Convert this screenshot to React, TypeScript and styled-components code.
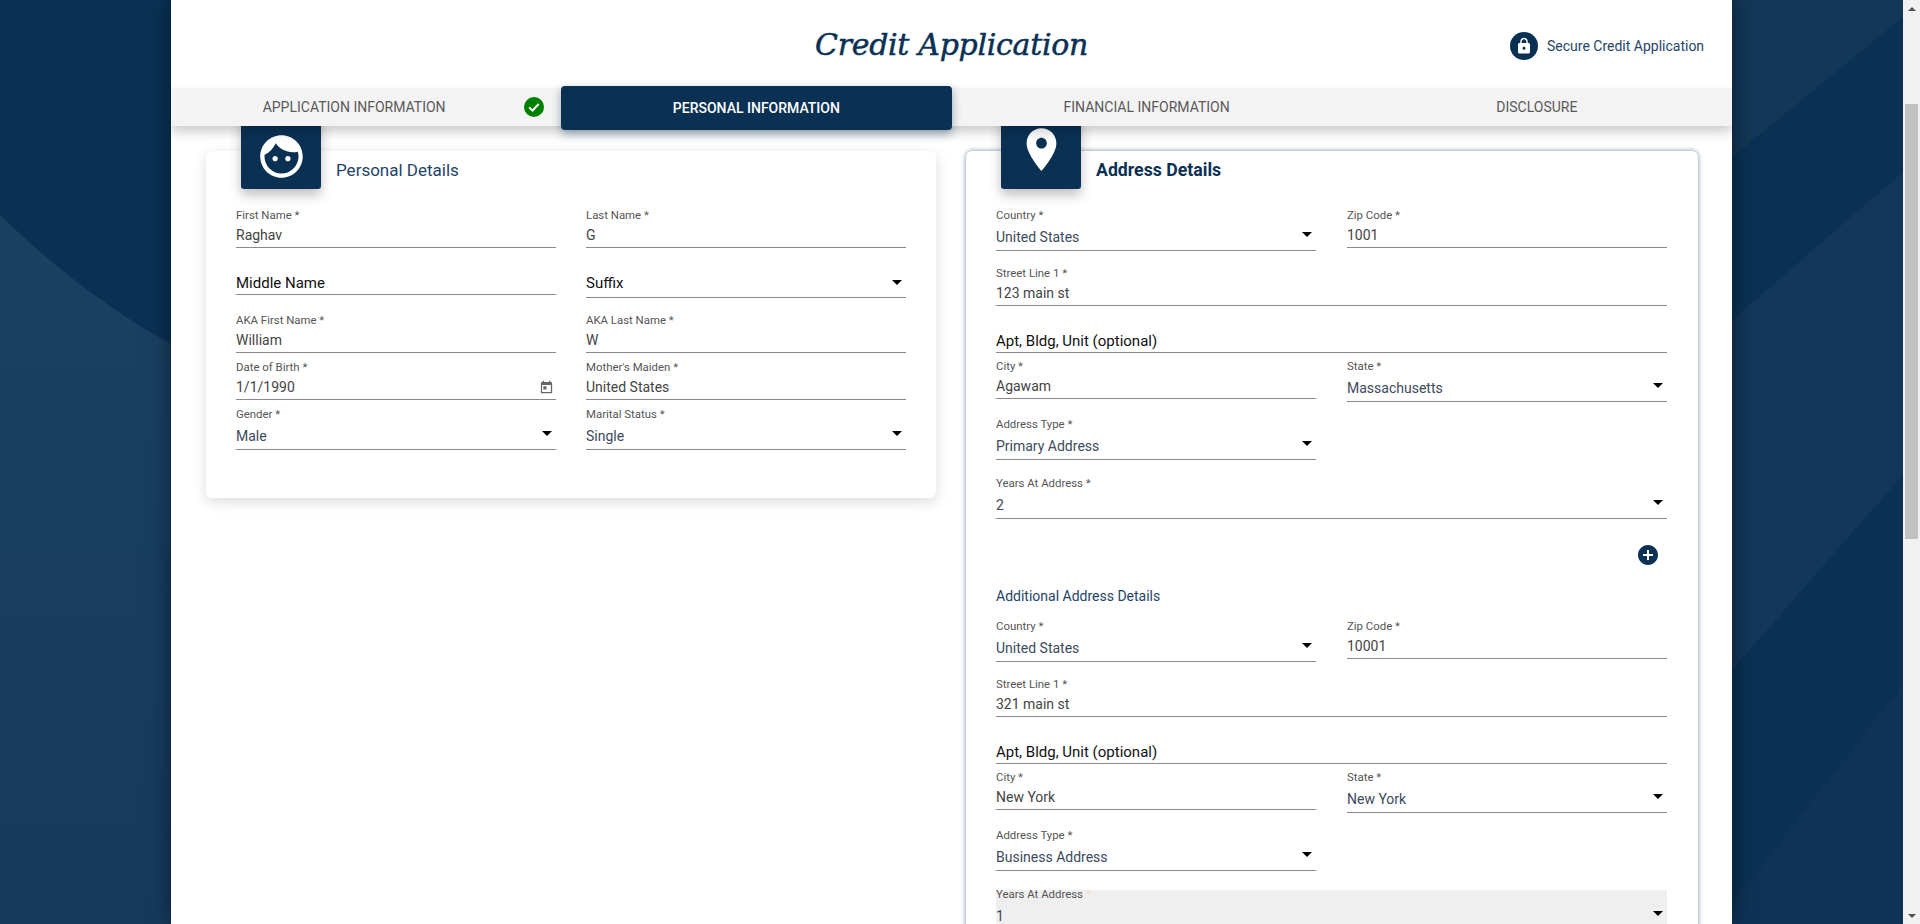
import React from "react";
import styled, { createGlobalStyle } from "styled-components";

const NAVY = "#0a3154";

const Global = createGlobalStyle`
  html, body { margin: 0; padding: 0; height: 924px; overflow: hidden; background: ${NAVY}; }
  #root { height: 924px; }
  * { box-sizing: border-box; }
`;

const Viewport = styled.div`
  display: flex;
  width: 1920px;
  height: 924px;
  font-family: Roboto, "Liberation Sans", sans-serif;
`;

const Stage = styled.div`
  position: relative;
  flex: 1;
  height: 924px;
  overflow: hidden;
  background: ${NAVY};
`;

const Backdrop = styled.svg`
  position: absolute;
  inset: 0;
  width: 1903px;
  height: 924px;
`;

const Scrollbar = styled.div`
  width: 17px;
  height: 924px;
  background: #f1f1f1;
  display: flex;
  flex-direction: column;
  align-items: center;
  justify-content: space-between;
  position: relative;
`;

const ArrowBtn = styled.div<{ $down?: boolean }>`
  height: 17px;
  width: 17px;
  display: flex;
  align-items: center;
  justify-content: center;
  &::before {
    content: "";
    border-left: 4px solid transparent;
    border-right: 4px solid transparent;
    ${(p) => (p.$down ? "border-top: 4px solid #505050;" : "border-bottom: 4px solid #505050;")}
  }
`;

const Thumb = styled.div`
  position: absolute;
  left: 2px;
  width: 13px;
  top: 104px;
  height: 435px;
  background: #c1c1c1;
`;

const Panel = styled.main`
  position: relative;
  width: 1561px;
  height: 924px;
  margin: 0 auto;
  background: #fff;
  box-shadow: 0 0 20px rgba(0, 0, 0, 0.5);
  overflow: hidden;
`;

const Header = styled.header`
  position: relative;
  height: 88px;
  display: flex;
  align-items: center;
  justify-content: center;
`;

const Title = styled.h1`
  margin: 0;
  font-family: "DejaVu Serif", "Liberation Serif", serif;
  font-style: italic;
  font-weight: 400;
  font-size: 30px;
  letter-spacing: -0.3px;
  -webkit-text-stroke: 0.5px ${NAVY};
  color: ${NAVY};
`;

const Secure = styled.div`
  position: absolute;
  left: 1339px;
  top: 32px;
  display: flex;
  align-items: center;
  gap: 9px;
  font-size: 14px;
  color: #1f4467;
`;

const SecureBadge = styled.span`
  width: 28px;
  height: 28px;
  border-radius: 50%;
  background: ${NAVY};
  display: flex;
  align-items: center;
  justify-content: center;
`;

const Tabs = styled.nav`
  position: relative;
  z-index: 3;
  height: 38px;
  display: grid;
  grid-template-columns: repeat(4, 1fr);
  background: #f3f3f3;
  box-shadow: 0 6px 12px rgba(0, 0, 0, 0.2);
`;

const Tab = styled.div<{ $active?: boolean; $done?: boolean }>`
  position: relative;
  display: flex;
  align-items: center;
  justify-content: center;
  font-size: 14px;
  text-transform: uppercase;
  padding-right: ${(p) => (p.$done ? "24px" : "0")};
  padding-bottom: ${(p) => (p.$active ? "1px" : "5px")};
  color: ${(p) => (p.$active ? "#fff" : "#5a5a5a")};
  font-weight: ${(p) => (p.$active ? 500 : 400)};
  ${(p) =>
    p.$active
      ? `background: ${NAVY}; height: 44px; margin-top: -2px; border-radius: 4px; box-shadow: 0 4px 10px rgba(10,49,84,.4);`
      : ""}
`;

const DoneMark = styled.svg`
  position: absolute;
  right: 17px;
  top: 9px;
  width: 20px;
  height: 20px;
`;

const Columns = styled.div`
  display: grid;
  grid-template-columns: 730px 732px;
  column-gap: 30px;
  padding: 25px 0 0 35px;
`;

const Card = styled.section<{ $focused?: boolean }>`
  position: relative;
  border-radius: 6px;
  background: #fff;
  padding: 57px ${(p) => (p.$focused ? "31px" : "30px")} 0 30px;
  box-shadow: ${(p) =>
    p.$focused
      ? "0 0 5px rgba(10,49,84,.55)"
      : "0 4px 14px rgba(0,0,0,.14)"};
  height: ${(p) => (p.$focused ? "1100px" : "347px")};
`;

const IconBox = styled.div<{ $lower?: boolean }>`
  position: absolute;
  left: 35px;
  top: -42px;
  width: 80px;
  height: 80px;
  padding-top: ${(p) => (p.$lower ? "14px" : "0")};
  border-radius: 3px;
  background: ${NAVY};
  display: flex;
  align-items: center;
  justify-content: center;
  box-shadow: 0 6px 12px rgba(0, 0, 0, 0.25);
`;

const CardTitle = styled.h2<{ $strong?: boolean }>`
  position: absolute;
  left: 130px;
  top: 10px;
  margin: 0;
  font-size: ${(p) => (p.$strong ? "17.7px" : "17px")};
  line-height: 19px;
  font-weight: ${(p) => (p.$strong ? 700 : 400)};
  color: ${(p) => (p.$strong ? NAVY : "#1f4467")};
`;

const Row = styled.div<{ $top?: number; $full?: boolean }>`
  display: grid;
  grid-template-columns: ${(p) => (p.$full ? "1fr" : "320px 320px")};
  justify-content: space-between;
  align-items: start;
  margin-top: ${(p) => p.$top ?? 0}px;
`;

const Field = styled.div<{ $disabled?: boolean }>`
  background: ${(p) =>
    p.$disabled ? "linear-gradient(transparent 3px, #efefef 3px)" : "transparent"};
`;

const Label = styled.div`
  font-size: 11.4px;
  line-height: 14px;
  height: 14px;
  color: #555;
`;

const Star = styled.span`
  color: #fbe3c4;
`;

const Line = styled.div<{ $mode: "text" | "select" | "ph" | "phselect" }>`
  position: relative;
  font-size: ${(p) => (p.$mode === "ph" || p.$mode === "phselect" ? "15px" : "14px")};
  line-height: 18px;
  height: ${(p) => ({ text: 26, select: 29, ph: 21, phselect: 24 })[p.$mode]}px;
  padding-top: ${(p) => ({ text: 4, select: 6, ph: 0, phselect: 0 })[p.$mode]}px;
  border-bottom: 1px solid #8a8a8a;
  color: ${(p) =>
    p.$mode === "ph" || p.$mode === "phselect"
      ? "#111"
      : p.$mode === "select"
        ? "#3c4a5c"
        : "#444"};
`;

const Caret = styled.span<{ $mode: "select" | "phselect" }>`
  position: absolute;
  right: 4px;
  top: ${(p) => (p.$mode === "select" ? 10 : 6)}px;
  border-left: 5px solid transparent;
  border-right: 5px solid transparent;
  border-top: 5px solid #000;
`;

const DateIcon = styled.svg`
  position: absolute;
  right: 2px;
  top: 6px;
  width: 15px;
  height: 15px;
`;

const PlusRow = styled.div`
  display: flex;
  justify-content: flex-end;
  padding-right: 7px;
  margin-top: 24px;
`;

const Plus = styled.svg`
  width: 24px;
  height: 24px;
  display: block;
`;

const SubHeading = styled.h3`
  margin: 20px 0 0;
  font-size: 14px;
  line-height: 18px;
  font-weight: 400;
  color: #1f4467;
`;

type Mode = "text" | "select" | "ph" | "phselect" | "date";

const TF = ({
  label,
  value,
  mode = "text",
  disabled,
  faintStar,
}: {
  label?: string;
  value: string;
  mode?: Mode;
  disabled?: boolean;
  faintStar?: boolean;
}) => {
  const m = mode === "date" ? "text" : mode;
  return (
    <Field $disabled={disabled}>
      {label && (
        <Label>
          {label}
          {faintStar && <Star> *</Star>}
        </Label>
      )}
      <Line $mode={m}>
        {value}
        {(m === "select" || m === "phselect") && <Caret $mode={m} />}
        {mode === "date" && (
          <DateIcon viewBox="0 0 24 24" fill="#666">
            <path d="M19 3h-1V1h-2v2H8V1H6v2H5c-1.11 0-1.99.9-1.99 2L3 19c0 1.1.89 2 2 2h14c1.1 0 2-.9 2-2V5c0-1.1-.9-2-2-2zm0 16H5V8h14v11zM7 10h5v5H7z" />
          </DateIcon>
        )}
      </Line>
    </Field>
  );
};

const AddressBlock = ({
  zip,
  street,
  city,
  state,
  type,
  first,
}: {
  zip: string;
  street: string;
  city: string;
  state: string;
  type: string;
  first?: boolean;
}) => (
  <>
    <Row $top={first ? 0 : 14}>
      <TF label="Country *" value="United States" mode="select" />
      <TF label="Zip Code *" value={zip} />
    </Row>
    <Row $full $top={15}>
      <TF label="Street Line 1 *" value={street} />
    </Row>
    <Row $full $top={26}>
      <TF value="Apt, Bldg, Unit (optional)" mode="ph" />
    </Row>
    <Row $top={6}>
      <TF label="City *" value={city} />
      <TF label="State *" value={state} mode="select" />
    </Row>
    <Row $top={15}>
      <TF label="Address Type *" value={type} mode="select" />
    </Row>
  </>
);

export default function App() {
  return (
    <Viewport>
      <Global />
      <Stage>
        <Backdrop viewBox="0 0 1903 924">
          <defs>
            <linearGradient id="leftShade" x1="0" y1="0" x2="0" y2="1">
              <stop offset="0" stopColor="#1a4161" />
              <stop offset="1" stopColor="#163a5c" />
            </linearGradient>
          </defs>
          <path d="M0 215 Q 85 298 180 349 L 180 924 L 0 924 Z" fill="url(#leftShade)" />
          <path d="M1725 163 L1903 17 L1903 0 L1725 0 Z" fill="#133757" />
          <path d="M1725 326 L1903 172 L1903 475 L1725 678 Z" fill="#12375a" />
          <path d="M1725 912 L1903 684 L1903 924 L1725 924 Z" fill="#0e3357" />
        </Backdrop>
        <Panel>
          <Header>
            <Title>Credit Application</Title>
            <Secure>
              <SecureBadge>
                <svg width="18" height="18" viewBox="0 0 24 24" fill="#fff">
                  <path d="M18 8h-1V6c0-2.76-2.24-5-5-5S7 3.24 7 6v2H6c-1.1 0-2 .9-2 2v10c0 1.1.9 2 2 2h12c1.1 0 2-.9 2-2V10c0-1.1-.9-2-2-2zm-6 9c-1.1 0-2-.9-2-2s.9-2 2-2 2 .9 2 2-.9 2-2 2zm3.1-9H8.9V6c0-1.71 1.39-3.1 3.1-3.1 1.71 0 3.1 1.39 3.1 3.1v2z" />
                </svg>
              </SecureBadge>
              Secure Credit Application
            </Secure>
          </Header>
          <Tabs>
            <Tab $done>
              Application Information
              <DoneMark viewBox="0 0 20 20">
                <circle cx="10" cy="10" r="10" fill="#008000" />
                <path d="M5.2 10.4l3.3 3.2 6.2-6.6" fill="none" stroke="#fff" strokeWidth="2" />
              </DoneMark>
            </Tab>
            <Tab $active>Personal Information</Tab>
            <Tab>Financial Information</Tab>
            <Tab>Disclosure</Tab>
          </Tabs>
          <Columns>
            <Card>
              <IconBox $lower>
                <svg width="51" height="51" viewBox="0 0 24 24" fill="#fff">
                  <path d="M9 11.75c-.69 0-1.25.56-1.25 1.25s.56 1.25 1.25 1.25 1.25-.56 1.25-1.25-.56-1.25-1.25-1.25zm6 0c-.69 0-1.25.56-1.25 1.25s.56 1.25 1.25 1.25 1.25-.56 1.25-1.25-.56-1.25-1.25-1.25zM12 2C6.48 2 2 6.48 2 12s4.48 10 10 10 10-4.48 10-10S17.52 2 12 2zm0 18c-4.41 0-8-3.59-8-8 0-.29.02-.58.05-.86 2.36-1.05 4.23-2.98 5.21-5.37C11.07 8.33 14.05 10 17.42 10c.78 0 1.53-.09 2.25-.26.21.71.33 1.47.33 2.26 0 4.41-3.59 8-8 8z" />
                </svg>
              </IconBox>
              <CardTitle>Personal Details</CardTitle>
              <Row>
                <TF label="First Name *" value="Raghav" />
                <TF label="Last Name *" value="G" />
              </Row>
              <Row $top={26}>
                <TF value="Middle Name" mode="ph" />
                <TF value="Suffix" mode="phselect" />
              </Row>
              <Row $top={15}>
                <TF label="AKA First Name *" value="William" />
                <TF label="AKA Last Name *" value="W" />
              </Row>
              <Row $top={7}>
                <TF label="Date of Birth *" value="1/1/1990" mode="date" />
                <TF label="Mother's Maiden *" value="United States" />
              </Row>
              <Row $top={7}>
                <TF label="Gender *" value="Male" mode="select" />
                <TF label="Marital Status *" value="Single" mode="select" />
              </Row>
            </Card>
            <Card $focused>
              <IconBox>
                <svg width="51" height="51" viewBox="0 0 24 24" fill="#fff">
                  <path d="M12 2C8.13 2 5 5.13 5 9c0 5.25 7 13 7 13s7-7.75 7-13c0-3.87-3.13-7-7-7zm0 9.5c-1.38 0-2.5-1.12-2.5-2.5s1.12-2.5 2.5-2.5 2.5 1.12 2.5 2.5-1.12 2.5-2.5 2.5z" />
                </svg>
              </IconBox>
              <CardTitle $strong>Address Details</CardTitle>
              <AddressBlock first zip="1001" street="123 main st" city="Agawam" state="Massachusetts" type="Primary Address" />
              <Row $full $top={16}>
                <TF label="Years At Address *" value="2" mode="select" />
              </Row>
              <PlusRow>
                <Plus viewBox="0 0 24 24" fill={NAVY}>
                  <path d="M12 2C6.48 2 2 6.48 2 12s4.48 10 10 10 10-4.48 10-10S17.52 2 12 2zm5 11h-4v4h-2v-4H7v-2h4V7h2v4h4v2z" />
                </Plus>
              </PlusRow>
              <SubHeading>Additional Address Details</SubHeading>
              <AddressBlock zip="10001" street="321 main st" city="New York" state="New York" type="Business Address" />
              <Row $full $top={16}>
                <TF label="Years At Address" faintStar value="1" mode="select" disabled />
              </Row>
            </Card>
          </Columns>
        </Panel>
      </Stage>
      <Scrollbar>
        <ArrowBtn />
        <Thumb />
        <ArrowBtn $down />
      </Scrollbar>
    </Viewport>
  );
}
